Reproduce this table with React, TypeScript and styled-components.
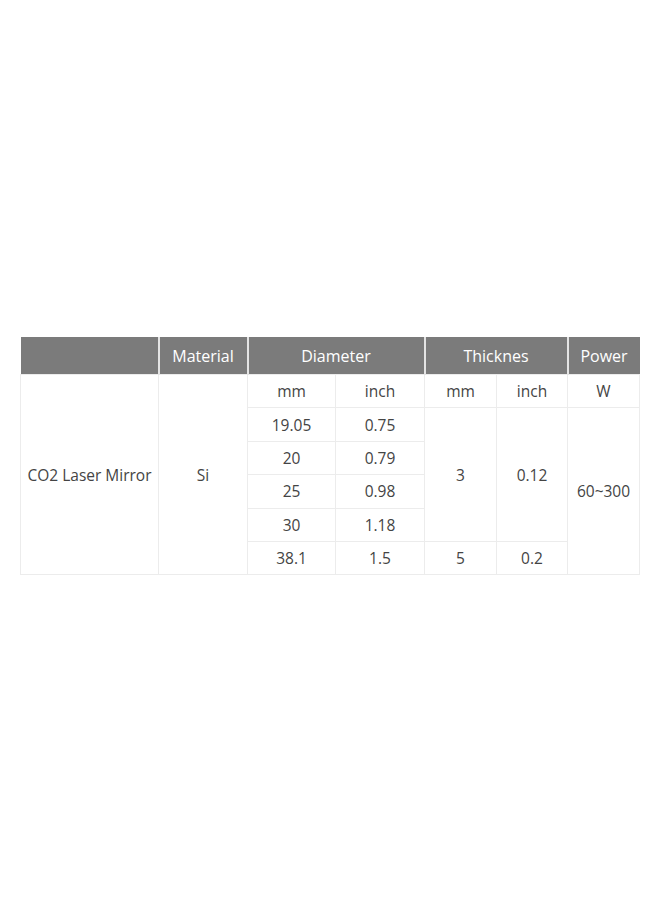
import React, { FC } from 'react';
import styled, { createGlobalStyle } from 'styled-components';

const GlobalStyle = createGlobalStyle`
  html, body {
    margin: 0;
    padding: 0;
    background: #ffffff;
  }
  body {
    font-family: 'Open Sans', 'Liberation Sans', sans-serif;
  }
`;

const diameters = [
  ['19.05', '0.75'],
  ['20', '0.79'],
  ['25', '0.98'],
  ['30', '1.18'],
];

const App: FC = () => {
  return (
    <>
      <GlobalStyle />
      <Page>
        <SpecTable>
          <colgroup>
            <col style={{ width: 138 }} />
            <col style={{ width: 89 }} />
            <col style={{ width: 88 }} />
            <col style={{ width: 89 }} />
            <col style={{ width: 72 }} />
            <col style={{ width: 71 }} />
            <col style={{ width: 72 }} />
          </colgroup>
          <thead>
            <tr>
              <HeadCell />
              <HeadCell>Material</HeadCell>
              <HeadCell colSpan={2}>Diameter</HeadCell>
              <HeadCell colSpan={2}>Thicknes</HeadCell>
              <HeadCell>Power</HeadCell>
            </tr>
          </thead>
          <tbody>
            <tr>
              <Cell rowSpan={6}>CO2 Laser Mirror</Cell>
              <Cell rowSpan={6}>Si</Cell>
              <Cell>mm</Cell>
              <Cell>inch</Cell>
              <Cell>mm</Cell>
              <Cell>inch</Cell>
              <Cell>W</Cell>
            </tr>
            {diameters.map(([mm, inch], i) => (
              <tr key={mm}>
                <Cell>{mm}</Cell>
                <Cell>{inch}</Cell>
                {i === 0 && (
                  <>
                    <Cell rowSpan={4}>3</Cell>
                    <Cell rowSpan={4}>0.12</Cell>
                    <Cell rowSpan={5}>60~300</Cell>
                  </>
                )}
              </tr>
            ))}
            <tr>
              <Cell>38.1</Cell>
              <Cell>1.5</Cell>
              <Cell>5</Cell>
              <Cell>0.2</Cell>
            </tr>
          </tbody>
        </SpecTable>
      </Page>
    </>
  );
};

const Page = styled.div`
  width: 660px;
  height: 900px;
  padding: 337px 21px 0 20px;
  box-sizing: border-box;
`;

const SpecTable = styled.table`
  width: 619px;
  border-collapse: collapse;
  table-layout: fixed;
`;

const HeadCell = styled.th`
  height: 37px;
  padding: 0;
  background: #7b7b7b;
  color: #ffffff;
  font-weight: 400;
  font-size: 16px;
  text-align: center;
  border-left: 2px solid #e4e4e4;

  &:first-child {
    border-left: none;
  }
`;

const Cell = styled.td`
  height: 32.4px;
  padding: 0;
  color: #444444;
  font-size: 15.5px;
  font-weight: 400;
  text-align: center;
  border: 1px solid #ececec;
`;

export default App;
